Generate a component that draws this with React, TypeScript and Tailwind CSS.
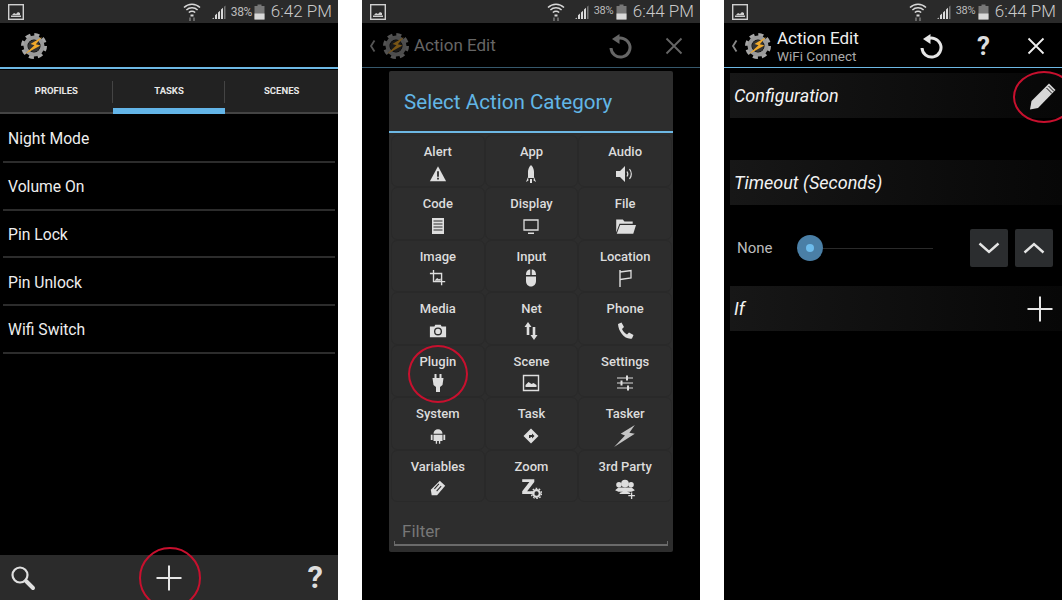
import type {ReactNode} from "react";

const font = {fontFamily: "Roboto, sans-serif"};

function Icon({children, size = 20, className = ""}: { children: ReactNode; size?: number; className?: string }) {
    return (
        <svg width={size} height={size} viewBox="0 0 20 20" className={className} fill="#dedede">
            {children}
        </svg>
    );
}

function StatusBar({time, compact}: { time: string; compact?: boolean }) {
    return (
        <div className="h-[23px] bg-[#2a2a2a] flex items-center shrink-0 pl-[8px] pr-[6px] text-[#c9c9c9]">
            <svg width="16" height="16" viewBox="0 0 16 16">
                <rect x="0.7" y="0.7" width="14.6" height="14.6" fill="#2a2a2a" stroke="#cfcfcf" strokeWidth="1.4"/>
                <path d="M3 11.5h10v1.5H3z" fill="#cfcfcf"/>
                <path d="M4 11l2-2 2 1 2-2 2 1v2z" fill="#cfcfcf"/>
            </svg>
            <div className="flex-1"/>
            <svg width="18" height="20" viewBox="0 0 18 20">
                <path d="M1 5.5C5.5 1 12.5 1 17 5.5M3.4 8C6.5 5 11.5 5 14.6 8M5.8 10.5c2-1.6 4.400-1.600 6.400 0" fill="none" stroke="#d8d8d8" strokeWidth="1.500"/>
                <path d="M7.500 12.500h3v2h-3z" fill="#d8d8d8"/>
                <path d="M7 19v-3.500M11 15.500V19" stroke="#888" strokeWidth="1.300"/>
            </svg>
            <svg width="16" height="16" viewBox="0 0 16 16" className={compact ? "ml-[9px]" : "ml-[10px]"}>
                <path d="M1 15l1.800-1.600V15zM4 15v-3.700l2-1.800V15zM7 15V8.500l2-1.800V15zM10 15V5.500l2-1.800V15z" fill="#d8d8d8"/>
                <path d="M13 15V2.800l1.500-1.300V15z" fill="#777"/>
            </svg>
            <span className={`ml-[4px] tracking-[-0.4px] text-[#bbb] ${compact ? "text-[11px] w-[20px]" : "text-[12px] w-[21px]"}`}>38%</span>
            <svg width="11" height="16" viewBox="0 0 11 16" className="ml-[2px]">
                <path d="M3.500 0.500h4v1.500h3v13.500H.5V2h3z" fill="#777"/>
                <path d="M.5 9.500h10v6H.5z" fill="#d9d9d9"/>
            </svg>
            <span className="ml-[6px] text-[17px] leading-none font-light whitespace-nowrap -mt-[1px]">{time}</span>
        </div>
    );
}

function TaskerLogo({dim}: { dim?: boolean }) {
    return (
        <svg width="28" height="28" viewBox="0 0 28 28" className={dim ? "opacity-50" : ""}>
            <circle cx="14" cy="14" r="11.300" fill="none" stroke="#a6a6a6" strokeWidth="3.400" strokeDasharray="5 3.870"/>
            <circle cx="14" cy="14" r="8.500" fill="none" stroke="#9a9a9a" strokeWidth="4"/>
            <circle cx="14" cy="14" r="6" fill="#333"/>
            <path d="M22 5L10.500 12l4 1.300L5 22l15.500-8.500-4.700-1.200z" fill="#f0a92a"/>
        </svg>
    );
}

function Undo({color, size = 26}: { color: string; size?: number }) {
    return (
        <svg width={size} height={size} viewBox="0 0 26 26" fill="none">
            <path d="M8.500 6.500A9.500 9.500 0 1 1 4 15" stroke={color} strokeWidth="3"/>
            <path d="M12.500 1v10l-7.500-5z" fill={color}/>
        </svg>
    );
}

function Close({color}: { color: string }) {
    return (
        <svg width="18" height="18" viewBox="0 0 18 18" fill="none">
            <path d="M1.500 1.500l15 15M16.500 1.500l-15 15" stroke={color} strokeWidth="1.800"/>
        </svg>
    );
}

function Plus() {
    return (
        <svg width="26" height="26" viewBox="0 0 26 26" fill="none">
            <path d="M0.500 13h25M13 0.500v25" stroke="#e6e6e6" strokeWidth="2"/>
        </svg>
    );
}

function RedCircle({className}: { className: string }) {
    return <div className={`absolute rounded-[50%] border-[2px] border-[#c8102e] ${className}`}/>;
}

function Back({color}: { color: string }) {
    return (
        <svg width="7" height="14" viewBox="0 0 7 14" fill="none">
            <path d="M5.500 1.500L2 7l3.500 5.500" stroke={color} strokeWidth="1.800"/>
        </svg>
    );
}

function TasksPhone() {
    const tasks = ["Night Mode", "Volume On", "Pin Lock", "Pin Unlock", "Wifi Switch"];

    return (
        <section className="relative w-[338px] h-full bg-black flex flex-col overflow-hidden">
            <StatusBar time="6:42 PM"/>
            <div className="h-[44px] flex items-center pl-[20px] pt-[1px] shrink-0">
                <TaskerLogo/>
            </div>
            <div className="h-[2px] bg-[#6db8e4] shrink-0"/>
            <div className="h-[44px] mt-[1px] bg-[#222] flex border-b-[2px] border-[#444] shrink-0">
                {["PROFILES", "TASKS", "SCENES"].map((tab, i) => (
                    <div key={tab} className="relative flex-1 flex items-center justify-center">
                        <span className="text-[9.500px] font-bold text-[#e8e8e8]">{tab}</span>
                        {i < 2 && <div className="absolute right-0 top-[11px] h-[22px] w-px bg-[#444]"/>}
                        {i === 1 && <div className="absolute left-0 right-0 -bottom-[2px] h-[6px] bg-[#63b5e8]"/>}
                    </div>
                ))}
            </div>
            <ul className="flex flex-col pt-[1px]">
                {tasks.map(task => (
                    <li key={task} className="h-[47.800px] mx-[3px] pl-[5px] pt-[2px] flex items-center border-b-[2px] border-[#2c2c2c] text-[15.700px] text-[#eee]">
                        {task}
                    </li>
                ))}
            </ul>
            <div className="flex-1"/>
            <div className="h-[45px] bg-[#2b2b2b] grid grid-cols-3 items-center pl-[10px] pr-[15px] shrink-0">
                <svg width="26" height="26" viewBox="0 0 26 26" fill="none">
                    <circle cx="10" cy="10" r="7.500" stroke="#e0e0e0" strokeWidth="2.200"/>
                    <path d="M16 16l7 7" stroke="#e0e0e0" strokeWidth="4" strokeLinecap="round"/>
                </svg>
                <div className="justify-self-center ml-[5px]"><Plus/></div>
                <span className="justify-self-end text-[31px] leading-none font-bold text-[#ddd]">?</span>
            </div>
            <RedCircle className="left-[139px] top-[547px] w-[62px] h-[62px]"/>
        </section>
    );
}

const categories: { label: string; icon: ReactNode }[] = [
    {label: "Alert", icon: <Icon size={18}><path d="M10 1.500L19 18H1z"/><path d="M9 7h2v6H9zM9 14.200h2v2H9z" fill="#2d2d2d"/></Icon>},
    {label: "App", icon: <Icon><path d="M10 1c2.500 2.500 3 5 3 7v6H7V8c0-2 .5-4.500 3-7zM7 13l-2 5 2.500-1.500zM13 13l2 5-2.500-1.500zM9 15h2v4H9z"/></Icon>},
    {label: "Audio", icon: <Icon><path d="M1 7h4l5-5v16l-5-5H1z"/><path d="M12 7.500c1 1.500 1 3.500 0 5M14.500 5c2.200 3 2.200 7 0 10" fill="none" stroke="#dedede" strokeWidth="1.200"/></Icon>},
    {label: "Code", icon: <Icon><path d="M4 2h12v16H4z"/><path d="M5.500 5h9M5.500 8h9M5.500 11h9M5.500 14h9" stroke="#2d2d2d" strokeWidth="1"/></Icon>},
    {label: "Display", icon: <Icon><path d="M3 4h14v10H3z" fill="none" stroke="#dedede" strokeWidth="1.300"/><path d="M7 16.500h6v1.500H7z"/></Icon>},
    {label: "File", icon: <Icon size={22}><path d="M2 4h6l1.500 2H17v2H5L2 16z"/><path d="M5.500 9H20l-2.500 8H2.500z"/></Icon>},
    {label: "Image", icon: <Icon size={18}><path d="M5 1v13h13M1 5h13v13" fill="none" stroke="#dedede" strokeWidth="1.500"/><path d="M6 13l3-3 2 1.500 2-1V13z"/></Icon>},
    {label: "Input", icon: <Icon><path d="M5 7c0-4 2-5.500 4.300-5.500V7zM15 7c0-4-2-5.500-4.300-5.500V7zM5 8.500h10V13c0 3-2 5.500-5 5.500S5 16 5 13z"/></Icon>},
    {label: "Location", icon: <Icon><path d="M5 2v17" stroke="#dedede" strokeWidth="1.400"/><path d="M5 4l11-1.500V10L5 11.500" fill="none" stroke="#dedede" strokeWidth="1.300"/></Icon>},
    {label: "Media", icon: <Icon size={18}><path d="M1 5h5l1-2h6l1 2h5v12H1z"/><circle cx="10" cy="10.500" r="3.700" fill="none" stroke="#2d2d2d" strokeWidth="1.500"/></Icon>},
    {label: "Net", icon: <Icon><path d="M7 1l3.500 5H8.300v8H5.700V6H3.500zM13 19l-3.500-5h2.200V6h2.600v8h2.200z"/></Icon>},
    {label: "Phone", icon: <Icon><path d="M3 3l3.500-1.500L9 6 7 8c1 2.500 3 4.500 5 5.500l2-2 4.500 2.500-1.500 3.500C10 19 3.500 11 3 3z"/></Icon>},
    {label: "Plugin", icon: <Icon><path d="M6.500 1h2v4h-2zM11.500 1h2v4h-2zM4.500 5h11l-1 7-2.500 2v5H8v-5l-2.500-2z"/></Icon>},
    {label: "Scene", icon: <Icon><path d="M2.500 2.500h15v15h-15z" fill="none" stroke="#dedede" strokeWidth="1.400"/><path d="M4.500 14v-2l3-3 3 2 2-1 3 2v2z"/></Icon>},
    {label: "Settings", icon: <Icon><path d="M2 5h16M2 10h16M2 15h16" stroke="#dedede" strokeWidth="1.200"/><path d="M11 2.500h2v5h-2zM5.500 7.500h2v5h-2zM12 12.500h2v5h-2z"/></Icon>},
    {label: "System", icon: <Icon size={18}><path d="M5 7.500a5 5 0 0 1 10 0zM5 8.500h10v7H12.500v3h-1.500v-3H9v3H7.500v-3H5zM2 8.500h2v6H2zM16 8.500h2v6h-2z"/></Icon>},
    {label: "Task", icon: <Icon><path d="M10 2.500L17.500 10 10 17.500 2.500 10z"/><path d="M8 12V9h3V7.500l2.500 2.500-2.500 2.500V11H9.500v1z" fill="#2d2d2d"/></Icon>},
    {label: "Tasker", icon: <svg width="24" height="24" viewBox="0 0 22 22" fill="#c4c4c4"><path d="M20 1L7 9l4 1.500L1 21l19-12-5-1z"/></svg>},
    {label: "Variables", icon: <Icon size={18}><path d="M12 2l6 5.500L9 18H3l-1-6z"/><path d="M6 11l5-5.500M8.500 13.500l5-5.500" stroke="#2d2d2d" strokeWidth="1.200"/></Icon>},
    {label: "Zoom", icon: <Icon size={22}><path d="M2 2h11v2.500L6.500 13H13v2.500H2V13l6.500-8.500H2z"/><circle cx="15" cy="15" r="3" fill="none" stroke="#dedede" strokeWidth="2"/><circle cx="15" cy="15" r="4.600" fill="none" stroke="#dedede" strokeWidth="1.200" strokeDasharray="1.500 1.400"/></Icon>},
    {label: "3rd Party", icon: <Icon size={22}><circle cx="10" cy="6" r="3.500"/><circle cx="4.500" cy="7" r="2.500"/><circle cx="15.500" cy="7" r="2.500"/><path d="M1 12l3-2.500h12l3 2.500-3 1.500H4zM5 15.500c0-1.500 2.500-2 5-2s5 .5 5 2z"/><path d="M16 14v6M13 17h6" stroke="#dedede" strokeWidth="1.200"/></Icon>},
];

function CategoryPhone() {
    return (
        <section className="relative w-[338px] h-full bg-black flex flex-col overflow-hidden">
            <StatusBar time="6:44 PM" compact/>
            <div className="h-[44px] flex items-center pl-[7px] pr-[17px] pt-[1px] shrink-0">
                <Back color="#555"/>
                <div className="ml-[6px]"><TaskerLogo dim/></div>
                <span className="ml-[4px] text-[17px] text-[#666]">Action Edit</span>
                <div className="flex-1"/>
                <Undo color="#666"/>
                <div className="ml-[32px]"><Close color="#666"/></div>
            </div>
            <div className="h-px bg-[#36586c] shrink-0"/>
            <div className="mx-[27px] mt-[3px] h-[481px] bg-[#2d2d2d] rounded-[2px] flex flex-col">
                <div className="h-[62px] flex items-center pl-[15px] pt-[2px] border-b-[2px] border-[#6db8e4] shrink-0">
                    <span className="text-[20.600px] text-[#62b6e6]">Select Action Category</span>
                </div>
                <div className="grid grid-cols-3 grid-rows-7 h-[367px] mt-[2px] ml-[2px] mr-[1px]">
                    {categories.map(({label, icon}) => (
                        <div key={label} className="rounded-[6px] border border-[#292929] flex flex-col items-center pt-[7px]">
                            <span className="text-[13px] leading-[18px] font-medium text-[#dcdcdc]">{label}</span>
                            <div className="h-[25px] flex items-center justify-center">{icon}</div>
                        </div>
                    ))}
                </div>
                <div className="relative mx-[5px] mt-[20px] h-[24px] pl-[8px] pb-[4px] border-b-[2px] border-[#6a6a6a] flex items-center">
                    <span className="text-[17px] leading-none text-[#777]">Filter</span>
                    <div className="absolute left-0 bottom-0 h-[3px] w-px bg-[#6a6a6a]"/>
                    <div className="absolute right-0 bottom-0 h-[3px] w-px bg-[#6a6a6a]"/>
                </div>
            </div>
            <RedCircle className="left-[46px] top-[345px] w-[60px] h-[58px]"/>
        </section>
    );
}

function SectionRow({label, children}: { label: string; children?: ReactNode }) {
    return (
        <div className="ml-[6px] h-[45px] bg-gradient-to-r from-[#171717] to-[#070707] flex items-center justify-between pl-[4px] pr-[9px] shrink-0">
            <span className="text-[18px] italic text-[#f2f2f2]">{label}</span>
            {children}
        </div>
    );
}

function StepButton({up}: { up?: boolean }) {
    return (
        <div className="w-[38px] h-[38px] rounded-[2px] bg-[#2b2d2f] flex items-center justify-center">
            <svg width="22" height="12" viewBox="0 0 22 12" fill="none">
                <path d={up ? "M1.500 10.500L11 2l9.500 8.500" : "M1.500 1.500L11 10l9.500-8.500"} stroke="#e4e4e4" strokeWidth="2.400"/>
            </svg>
        </div>
    );
}

function EditPhone() {
    return (
        <section className="relative w-[338px] h-full bg-black flex flex-col overflow-hidden">
            <StatusBar time="6:44 PM" compact/>
            <div className="h-[44px] flex items-center pl-[7px] pr-[17px] pt-[1px] shrink-0">
                <Back color="#888"/>
                <div className="ml-[6px]"><TaskerLogo/></div>
                <div className="ml-[5px] pt-[1px] flex flex-col">
                    <span className="text-[17px] leading-[20px] text-[#eee]">Action Edit</span>
                    <span className="text-[13.500px] leading-[16px] text-[#aaa]">WiFi Connect</span>
                </div>
                <div className="flex-1"/>
                <Undo color="#e6e6e6"/>
                <span className="ml-[33px] text-[26px] leading-none font-bold text-[#ddd]">?</span>
                <div className="ml-[37px]"><Close color="#eee"/></div>
            </div>
            <div className="h-px bg-[#6db8e4] shrink-0"/>
            <div className="h-[5px] shrink-0"/>
            <SectionRow label="Configuration">
                <svg width="28" height="28" viewBox="0 0 28 28" className="-mr-[4px]">
                    <path d="M20 1.500l6.500 6.500L9 26l-8 1.500L2.500 19z" fill="#d8d8d8"/>
                    <path d="M17.500 6l5.500 5.500M19.500 4l5.500 5.500" stroke="#111" strokeWidth="1"/>
                </svg>
            </SectionRow>
            <div className="h-[42px] shrink-0"/>
            <SectionRow label="Timeout (Seconds)"/>
            <div className="h-[81px] flex items-center pl-[13px] pr-[9px] pt-[5px] shrink-0">
                <span className="w-[36px] text-[15px] text-[#bbb]">None</span>
                <div className="relative ml-[24px] w-[136px] h-px bg-[#2a2a2a]">
                    <div className="absolute left-0 -top-[13px] w-[26px] h-[26px] rounded-full bg-[#4a7fa6] flex items-center justify-center">
                        <div className="w-[8px] h-[8px] rounded-full bg-[#6dbcec]"/>
                    </div>
                </div>
                <div className="flex-1"/>
                <div className="flex gap-[7px]">
                    <StepButton/>
                    <StepButton up/>
                </div>
            </div>
            <SectionRow label="If">
                <Plus/>
            </SectionRow>
            <RedCircle className="left-[289px] top-[71px] w-[62px] h-[52px]"/>
        </section>
    );
}

export default function App() {
    return (
        <main style={font} className="w-[1062px] h-[600px] bg-white flex justify-between overflow-hidden">
            <TasksPhone/>
            <CategoryPhone/>
            <EditPhone/>
        </main>
    );
}
